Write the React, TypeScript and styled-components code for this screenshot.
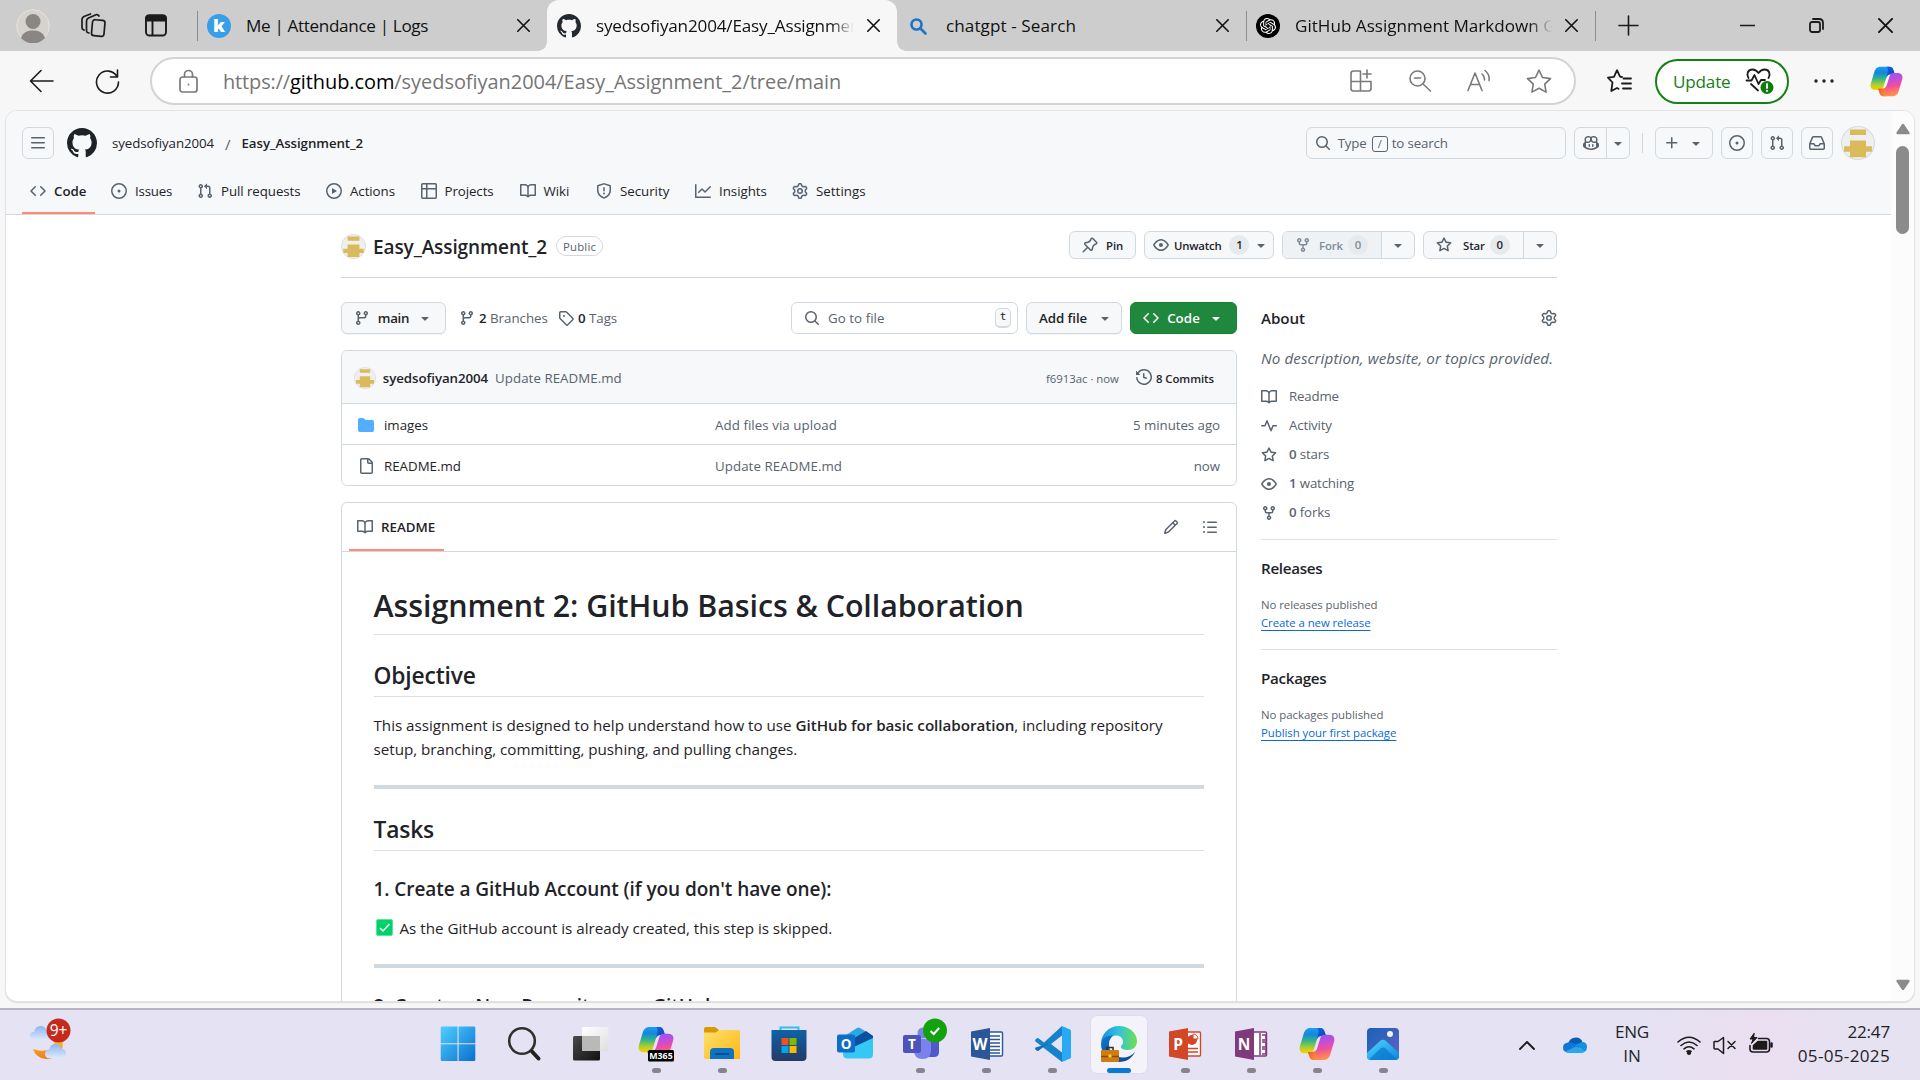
import React, { ReactNode } from 'react';
import styled, { createGlobalStyle, css } from 'styled-components';
import { SiOpenai } from 'react-icons/si';

const ink = '#1f2328';
const muted = '#59636e';
const line = '#d1d9e0';
const canvas = '#f6f8fa';

/* Octicons, 16px grid */
const paths = {
  github: 'M8 0c4.42 0 8 3.58 8 8a8.013 8.013 0 0 1-5.45 7.59c-.4.08-.55-.17-.55-.38 0-.27.01-1.13.01-2.2 0-.75-.25-1.23-.54-1.48 1.78-.2 3.65-.88 3.65-3.95 0-.88-.31-1.59-.82-2.15.08-.2.36-1.02-.08-2.12 0 0-.67-.22-2.2.82-.64-.18-1.32-.27-2-.27-.68 0-1.36.09-2 .27-1.53-1.03-2.2-.82-2.2-.82-.44 1.1-.16 1.92-.08 2.12-.51.56-.82 1.28-.82 2.15 0 3.06 1.86 3.75 3.64 3.95-.23.2-.44.55-.51 1.07-.46.21-1.61.55-2.33-.66-.15-.24-.6-.83-1.23-.82-.67.01-.27.38.01.53.34.19.73.9.82 1.13.16.45.68 1.31 2.69.94 0 .67.01 1.3.01 1.49 0 .21-.15.45-.55.38A7.995 7.995 0 0 1 0 8c0-4.42 3.58-8 8-8Z',
  code: 'm11.28 3.22 4.25 4.25a.75.75 0 0 1 0 1.06l-4.25 4.25a.749.749 0 0 1-1.275-.326.749.749 0 0 1 .215-.734L13.94 8l-3.72-3.72a.749.749 0 0 1 .326-1.275.749.749 0 0 1 .734.215Zm-6.56 0a.751.751 0 0 1 1.042.018.751.751 0 0 1 .018 1.042L2.06 8l3.72 3.72a.749.749 0 0 1-.326 1.275.749.749 0 0 1-.734-.215L.47 8.53a.75.75 0 0 1 0-1.06Z',
  issue: 'M8 9.5a1.5 1.5 0 1 0 0-3 1.5 1.5 0 0 0 0 3Z M8 0a8 8 0 1 1 0 16A8 8 0 0 1 8 0ZM1.5 8a6.5 6.5 0 1 0 13 0 6.5 6.5 0 0 0-13 0Z',
  pull: 'M1.5 3.25a2.25 2.25 0 1 1 3 2.122v5.256a2.251 2.251 0 1 1-1.5 0V5.372A2.25 2.25 0 0 1 1.5 3.25Zm5.677-.177L9.573.677A.25.25 0 0 1 10 .854V2.5h1A2.5 2.5 0 0 1 13.5 5v5.628a2.251 2.251 0 1 1-1.5 0V5a1 1 0 0 0-1-1h-1v1.646a.25.25 0 0 1-.427.177L7.177 3.427a.25.25 0 0 1 0-.354ZM3.75 2.5a.75.75 0 1 0 0 1.5.75.75 0 0 0 0-1.5Zm0 9.5a.75.75 0 1 0 0 1.5.75.75 0 0 0 0-1.5Zm8.25.75a.75.75 0 1 0 1.5 0 .75.75 0 0 0-1.5 0Z',
  play: 'M8 0a8 8 0 1 1 0 16A8 8 0 0 1 8 0ZM1.5 8a6.5 6.5 0 1 0 13 0 6.5 6.5 0 0 0-13 0Zm4.879-2.773 4.264 2.559a.25.25 0 0 1 0 .428l-4.264 2.559A.25.25 0 0 1 6 10.559V5.442a.25.25 0 0 1 .379-.215Z',
  table: 'M0 1.75C0 .784.784 0 1.75 0h12.5C15.216 0 16 .784 16 1.75v12.5A1.75 1.75 0 0 1 14.25 16H1.75A1.75 1.75 0 0 1 0 14.25ZM6.5 6.5v8h7.75a.25.25 0 0 0 .25-.25V6.5Zm8-1.5V1.75a.25.25 0 0 0-.25-.25H6.5V5Zm-13 1.5v7.75c0 .138.112.25.25.25H5v-8ZM5 5V1.5H1.75a.25.25 0 0 0-.25.25V5Z',
  book: 'M0 1.75A.75.75 0 0 1 .75 1h4.253c1.227 0 2.317.59 3 1.501A3.743 3.743 0 0 1 11.006 1h4.245a.75.75 0 0 1 .75.75v10.5a.75.75 0 0 1-.75.75h-4.507a2.25 2.25 0 0 0-1.591.659l-.622.621a.75.75 0 0 1-1.06 0l-.622-.621A2.25 2.25 0 0 0 5.258 13H.75a.75.75 0 0 1-.75-.75Zm7.251 10.324.004-5.073-.002-2.253A2.25 2.25 0 0 0 5.003 2.5H1.5v9h3.757a3.75 3.75 0 0 1 1.994.574ZM8.755 4.75l-.004 7.322a3.752 3.752 0 0 1 1.992-.572H14.5v-9h-3.495a2.25 2.25 0 0 0-2.25 2.25Z',
  shield: 'M7.467.133a1.748 1.748 0 0 1 1.066 0l5.25 1.68A1.75 1.75 0 0 1 15 3.48V7c0 1.566-.32 3.182-1.303 4.682-.983 1.498-2.585 2.813-5.032 3.855a1.697 1.697 0 0 1-1.33 0c-2.447-1.042-4.049-2.357-5.032-3.855C1.32 10.182 1 8.566 1 7V3.48a1.75 1.75 0 0 1 1.217-1.667Zm.61 1.429a.25.25 0 0 0-.153 0l-5.25 1.68a.25.25 0 0 0-.174.238V7c0 1.358.275 2.666 1.057 3.86.784 1.194 2.121 2.34 4.366 3.297a.196.196 0 0 0 .154 0c2.245-.956 3.582-2.104 4.366-3.298C13.225 9.666 13.5 8.36 13.5 7V3.48a.251.251 0 0 0-.174-.237l-5.25-1.68ZM8.75 4.75v3a.75.75 0 0 1-1.5 0v-3a.75.75 0 0 1 1.5 0ZM9 10.5a1 1 0 1 1-2 0 1 1 0 0 1 2 0Z',
  graph: 'M1.5 1.75V13.5h13.75a.75.75 0 0 1 0 1.5H.75a.75.75 0 0 1-.75-.75V1.75a.75.75 0 0 1 1.5 0Zm14.28 2.53-5.25 5.25a.75.75 0 0 1-1.06 0L7 7.06 4.28 9.78a.751.751 0 0 1-1.042-.018.751.751 0 0 1-.018-1.042l3.25-3.25a.75.75 0 0 1 1.06 0L10 7.94l4.72-4.72a.751.751 0 0 1 1.042.018.751.751 0 0 1 .018 1.042Z',
  gear: 'M8 0a8.2 8.2 0 0 1 .701.031C9.444.095 9.99.645 10.16 1.29l.288 1.107c.018.066.079.158.212.224.231.114.454.243.668.386.123.082.233.09.299.071l1.103-.303c.644-.176 1.392.021 1.82.63.27.385.506.792.704 1.218.315.675.111 1.422-.364 1.891l-.814.806c-.049.048-.098.147-.088.294.016.257.016.515 0 .772-.01.147.038.246.088.294l.814.806c.475.469.679 1.216.364 1.891a7.977 7.977 0 0 1-.704 1.217c-.428.61-1.176.807-1.82.63l-1.102-.302c-.067-.019-.177-.011-.3.071a5.909 5.909 0 0 1-.668.386c-.133.066-.194.158-.211.224l-.29 1.106c-.168.646-.715 1.196-1.458 1.26a8.006 8.006 0 0 1-1.402 0c-.743-.064-1.289-.614-1.458-1.26l-.289-1.106c-.018-.066-.079-.158-.212-.224a5.738 5.738 0 0 1-.668-.386c-.123-.082-.233-.09-.299-.071l-1.103.303c-.644.176-1.392-.021-1.82-.63a8.12 8.12 0 0 1-.704-1.218c-.315-.675-.111-1.422.363-1.891l.815-.806c.05-.048.098-.147.088-.294a6.214 6.214 0 0 1 0-.772c.01-.147-.038-.246-.088-.294l-.815-.806C.635 6.045.431 5.298.746 4.623a7.92 7.92 0 0 1 .704-1.217c.428-.61 1.176-.807 1.82-.63l1.102.302c.067.019.177.011.3-.071.214-.143.437-.272.668-.386.133-.066.194-.158.211-.224l.29-1.106C6.009.645 6.556.095 7.299.03 7.53.01 7.764 0 8 0Zm-.571 1.525c-.036.003-.108.036-.137.146l-.289 1.105c-.147.561-.549.967-.998 1.189-.173.086-.34.183-.5.29-.417.278-.97.423-1.529.27l-1.103-.303c-.109-.03-.175.016-.195.045-.22.312-.412.644-.573.99-.014.031-.021.11.059.19l.815.806c.411.406.562.957.53 1.456a4.709 4.709 0 0 0 0 .582c.032.499-.119 1.05-.53 1.456l-.815.806c-.081.08-.073.159-.059.19.162.346.353.677.573.989.02.03.085.076.195.046l1.102-.303c.56-.153 1.113-.008 1.53.27.161.107.328.204.501.29.447.222.85.629.997 1.189l.289 1.105c.029.109.101.143.137.146a6.6 6.6 0 0 0 1.142 0c.036-.003.108-.036.137-.146l.289-1.105c.147-.561.549-.967.998-1.189.173-.086.34-.183.5-.29.417-.278.97-.423 1.529-.27l1.103.303c.109.029.175-.016.195-.045.22-.313.411-.644.573-.99.014-.031.021-.11-.059-.19l-.815-.806c-.411-.406-.562-.957-.53-1.456a4.709 4.709 0 0 0 0-.582c-.032-.499.119-1.05.53-1.456l.815-.806c.081-.08.073-.159.059-.19a6.464 6.464 0 0 0-.573-.989c-.02-.03-.085-.076-.195-.046l-1.102.303c-.56.153-1.113.008-1.53-.27a4.44 4.44 0 0 0-.501-.29c-.447-.222-.85-.629-.997-1.189l-.289-1.105c-.029-.11-.101-.143-.137-.146a6.6 6.6 0 0 0-1.142 0ZM11 8a3 3 0 1 1-6 0 3 3 0 0 1 6 0ZM9.5 8a1.5 1.5 0 1 0-3.001.001A1.5 1.5 0 0 0 9.5 8Z',
  search: 'M10.68 11.74a6 6 0 0 1-7.922-8.982 6 6 0 0 1 8.982 7.922l3.04 3.04a.749.749 0 0 1-.326 1.275.749.749 0 0 1-.734-.215ZM11.5 7a4.499 4.499 0 1 0-8.997 0A4.499 4.499 0 0 0 11.5 7Z',
  branch: 'M9.5 3.25a2.25 2.25 0 1 1 3 2.122V6A2.5 2.5 0 0 1 10 8.5H6a1 1 0 0 0-1 1v1.128a2.251 2.251 0 1 1-1.5 0V5.372a2.25 2.25 0 1 1 1.5 0v1.836A2.493 2.493 0 0 1 6 7h4a1 1 0 0 0 1-1v-.628A2.25 2.25 0 0 1 9.5 3.25Zm-6 0a.75.75 0 1 0 1.5 0 .75.75 0 0 0-1.5 0Zm8.25-.75a.75.75 0 1 0 0 1.5.75.75 0 0 0 0-1.5ZM4.25 12a.75.75 0 1 0 0 1.5.75.75 0 0 0 0-1.5Z',
  tag: 'M1 7.775V2.75C1 1.784 1.784 1 2.75 1h5.025c.464 0 .91.184 1.238.513l6.25 6.25a1.75 1.75 0 0 1 0 2.474l-5.026 5.026a1.75 1.75 0 0 1-2.474 0l-6.25-6.25A1.752 1.752 0 0 1 1 7.775Zm1.5 0c0 .066.026.13.073.177l6.25 6.25a.25.25 0 0 0 .354 0l5.025-5.025a.25.25 0 0 0 0-.354l-6.25-6.25a.25.25 0 0 0-.177-.073H2.75a.25.25 0 0 0-.25.25ZM6 5a1 1 0 1 1 0 2 1 1 0 0 1 0-2Z',
  fork: 'M5 5.372v.878c0 .414.336.75.75.75h4.5a.75.75 0 0 0 .75-.75v-.878a2.25 2.25 0 1 1 1.5 0v.878a2.25 2.25 0 0 1-2.25 2.25h-1.5v2.128a2.251 2.251 0 1 1-1.5 0V8.5h-1.5A2.25 2.25 0 0 1 3.5 6.25v-.878a2.25 2.25 0 1 1 1.5 0ZM5 3.25a.75.75 0 1 0-1.5 0 .75.75 0 0 0 1.5 0Zm6.75.75a.75.75 0 1 0 0-1.5.75.75 0 0 0 0 1.5Zm-3 8.75a.75.75 0 1 0-1.5 0 .75.75 0 0 0 1.5 0Z',
  star: 'M8 .25a.75.75 0 0 1 .673.418l1.882 3.815 4.21.612a.75.75 0 0 1 .416 1.279l-3.046 2.97.719 4.192a.751.751 0 0 1-1.088.791L8 12.347l-3.766 1.98a.75.75 0 0 1-1.088-.79l.72-4.194L.818 6.374a.75.75 0 0 1 .416-1.28l4.21-.611L7.327.668A.75.75 0 0 1 8 .25Zm0 2.445L6.615 5.5a.75.75 0 0 1-.564.41l-3.097.45 2.24 2.184a.75.75 0 0 1 .216.664l-.528 3.084 2.769-1.456a.75.75 0 0 1 .698 0l2.77 1.456-.53-3.084a.75.75 0 0 1 .216-.664l2.24-2.183-3.096-.45a.75.75 0 0 1-.564-.41L8 2.694Z',
  eye: 'M8 2c1.981 0 3.671.992 4.933 2.078 1.27 1.091 2.187 2.345 2.637 3.023a1.62 1.62 0 0 1 0 1.798c-.45.678-1.367 1.932-2.637 3.023C11.67 13.008 9.981 14 8 14c-1.981 0-3.671-.992-4.933-2.078C1.797 10.83.88 9.576.43 8.898a1.62 1.62 0 0 1 0-1.798c.45-.677 1.367-1.931 2.637-3.022C4.33 2.992 6.019 2 8 2ZM1.679 7.932a.12.12 0 0 0 0 .136c.411.622 1.241 1.75 2.366 2.717C5.176 11.758 6.527 12.5 8 12.5c1.473 0 2.825-.742 3.955-1.715 1.124-.967 1.954-2.096 2.366-2.717a.12.12 0 0 0 0-.136c-.412-.621-1.242-1.75-2.366-2.717C10.824 4.242 9.473 3.5 8 3.5c-1.473 0-2.825.742-3.955 1.715-1.124.967-1.954 2.096-2.366 2.717ZM8 10a2 2 0 1 1-.001-3.999A2 2 0 0 1 8 10Z',
  pulse: 'M6 2c.306 0 .582.187.696.471L10 10.731l1.304-3.26A.751.751 0 0 1 12 7h3.25a.75.75 0 0 1 0 1.5h-2.742l-1.812 4.528a.751.751 0 0 1-1.392 0L6 4.77 4.696 8.03A.75.75 0 0 1 4 8.5H.75a.75.75 0 0 1 0-1.5h2.742l1.812-4.529A.751.751 0 0 1 6 2Z',
  history: 'm.427 1.927 1.215 1.215a8.002 8.002 0 1 1-1.6 5.685.75.75 0 1 1 1.493-.154 6.5 6.5 0 1 0 1.18-4.458l1.358 1.358A.25.25 0 0 1 3.896 6H.25A.25.25 0 0 1 0 5.75V2.104a.25.25 0 0 1 .427-.177ZM7.75 4a.75.75 0 0 1 .75.75v2.992l2.028.812a.75.75 0 0 1-.557 1.392l-2.5-1A.751.751 0 0 1 7 8.25v-3.5A.75.75 0 0 1 7.75 4Z',
  folder: 'M1.75 1A1.75 1.75 0 0 0 0 2.75v10.5C0 14.216.784 15 1.75 15h12.5A1.75 1.75 0 0 0 16 13.25v-8.5A1.75 1.75 0 0 0 14.25 3H7.5a.25.25 0 0 1-.2-.1l-.9-1.2C6.07 1.26 5.55 1 5 1H1.75Z',
  file: 'M2 1.75C2 .784 2.784 0 3.75 0h6.586c.464 0 .909.184 1.237.513l2.914 2.914c.329.328.513.773.513 1.237v9.586A1.75 1.75 0 0 1 13.25 16h-9.5A1.75 1.75 0 0 1 2 14.25Zm1.75-.25a.25.25 0 0 0-.25.25v12.5c0 .138.112.25.25.25h9.5a.25.25 0 0 0 .25-.25V6h-2.75A1.75 1.75 0 0 1 9 4.25V1.5Zm6.75.062V4.25c0 .138.112.25.25.25h2.688l-.011-.013-2.914-2.914-.013-.011Z',
  pencil: 'M11.013 1.427a1.75 1.75 0 0 1 2.474 0l1.086 1.086a1.75 1.75 0 0 1 0 2.474l-8.61 8.61c-.21.21-.47.364-.756.445l-3.251.93a.75.75 0 0 1-.927-.928l.929-3.25c.081-.286.235-.547.445-.758l8.61-8.61Zm.176 4.823L9.75 4.81l-6.286 6.287a.253.253 0 0 0-.064.108l-.558 1.953 1.953-.558a.253.253 0 0 0 .108-.064Zm1.238-3.763a.25.25 0 0 0-.354 0L10.811 3.75l1.439 1.44 1.263-1.263a.25.25 0 0 0 0-.354Z',
  list: 'M5.75 2.5h8.5a.75.75 0 0 1 0 1.5h-8.5a.75.75 0 0 1 0-1.5Zm0 5h8.5a.75.75 0 0 1 0 1.5h-8.5a.75.75 0 0 1 0-1.5Zm0 5h8.5a.75.75 0 0 1 0 1.5h-8.5a.75.75 0 0 1 0-1.5ZM2 14a1 1 0 1 1 0-2 1 1 0 0 1 0 2Zm1-6a1 1 0 1 1-2 0 1 1 0 0 1 2 0ZM2 4a1 1 0 1 1 0-2 1 1 0 0 1 0 2Z',
  caret: 'm4.427 7.427 3.396 3.396a.25.25 0 0 0 .354 0l3.396-3.396A.25.25 0 0 0 11.396 7H4.604a.25.25 0 0 0-.177.427Z',
  plus: 'M7.75 2a.75.75 0 0 1 .75.75V7h4.25a.75.75 0 0 1 0 1.5H8.5v4.25a.75.75 0 0 1-1.5 0V8.5H2.75a.75.75 0 0 1 0-1.5H7V2.75A.75.75 0 0 1 7.75 2Z',
  inbox: 'M2.8 2.06A1.75 1.75 0 0 1 4.41 1h7.18c.7 0 1.333.417 1.61 1.06l2.74 6.395c.04.093.06.194.06.295v4.5A1.75 1.75 0 0 1 14.25 15H1.75A1.75 1.75 0 0 1 0 13.25v-4.5c0-.101.02-.202.06-.295Zm1.61.44a.25.25 0 0 0-.23.152L1.887 8H4.75a.75.75 0 0 1 .6.3L6.625 10h2.75l1.275-1.7a.75.75 0 0 1 .6-.3h2.863L11.82 2.652a.25.25 0 0 0-.23-.152Zm10.09 7h-2.875l-1.275 1.7a.75.75 0 0 1-.6.3h-3.5a.75.75 0 0 1-.6-.3L4.375 9.5H1.5v3.75c0 .138.112.25.25.25h12.5a.25.25 0 0 0 .25-.25Z',
  bars: 'M1 2.75A.75.75 0 0 1 1.75 2h12.5a.75.75 0 0 1 0 1.5H1.75A.75.75 0 0 1 1 2.75Zm0 5A.75.75 0 0 1 1.75 7h12.5a.75.75 0 0 1 0 1.5H1.75A.75.75 0 0 1 1 7.75ZM1.75 12h12.5a.75.75 0 0 1 0 1.5H1.75a.75.75 0 0 1 0-1.5Z',
  pin: 'm11.294.984 3.722 3.722a1.75 1.75 0 0 1-.504 2.826l-1.327.613a3.089 3.089 0 0 0-1.707 2.084l-.584 2.454c-.317 1.332-1.972 1.8-2.94.832L5.75 11.311 1.78 15.28a.749.749 0 1 1-1.06-1.06l3.969-3.97-2.204-2.204c-.968-.968-.5-2.623.832-2.94l2.454-.584a3.08 3.08 0 0 0 2.084-1.707l.613-1.327a1.75 1.75 0 0 1 2.826-.504ZM6.283 9.723l2.732 2.731a.25.25 0 0 0 .42-.119l.584-2.454a4.586 4.586 0 0 1 2.537-3.098l1.328-.613a.25.25 0 0 0 .072-.404l-3.722-3.722a.25.25 0 0 0-.404.072l-.613 1.328a4.584 4.584 0 0 1-3.098 2.537l-2.454.584a.25.25 0 0 0-.119.42l2.731 2.732Z',
  copilot: 'M7.998 15.035c-4.562 0-7.873-2.914-7.998-3.749V9.338c.085-.628.677-1.686 1.588-2.065.013-.07.024-.143.036-.218.029-.183.06-.384.126-.612-.201-.508-.254-1.084-.254-1.656 0-.87.128-1.769.693-2.484.579-.733 1.494-1.124 2.724-1.261 1.206-.134 2.262.034 2.944.765.05.053.096.108.139.165.044-.057.094-.112.143-.165.682-.731 1.738-.899 2.944-.765 1.23.137 2.145.528 2.724 1.261.566.715.693 1.614.693 2.484 0 .572-.053 1.148-.254 1.656.066.228.098.429.126.612.012.076.024.148.037.218.924.385 1.522 1.471 1.591 2.095v1.872c0 .766-3.351 3.795-8.002 3.795Zm0-1.485c2.28 0 4.584-1.11 5.002-1.433V7.862l-.023-.116c-.49.21-1.075.291-1.727.291-1.146 0-2.059-.327-2.71-.991A3.222 3.222 0 0 1 8 6.303a3.24 3.24 0 0 1-.544.743c-.65.664-1.563.991-2.71.991-.652 0-1.236-.081-1.727-.291l-.023.116v4.255c.419.323 2.722 1.433 5.002 1.433ZM6.762 2.83c-.193-.206-.637-.413-1.682-.297-1.019.113-1.479.404-1.713.7-.247.312-.369.789-.369 1.554 0 .793.129 1.171.308 1.371.162.181.519.379 1.442.379.853 0 1.339-.235 1.638-.54.315-.322.527-.827.617-1.553.117-.935-.037-1.395-.241-1.614Zm4.155-.297c-1.044-.116-1.488.091-1.681.297-.204.219-.359.679-.242 1.614.091.726.303 1.231.618 1.553.299.305.784.54 1.638.54.922 0 1.28-.198 1.442-.379.179-.2.308-.578.308-1.371 0-.765-.123-1.242-.37-1.554-.233-.296-.693-.587-1.713-.7Z M6.25 9.037a.75.75 0 0 1 .75.75v1.501a.75.75 0 0 1-1.5 0V9.787a.75.75 0 0 1 .75-.75Zm4.25.75v1.501a.75.75 0 0 1-1.5 0V9.787a.75.75 0 0 1 1.5 0Z',
};

const Glyph = styled.svg<{ $size?: number; $color?: string }>`
  flex: none;
  display: block;
  width: ${p => p.$size ?? 16}px;
  height: ${p => p.$size ?? 16}px;
  fill: ${p => p.$color ?? muted};
`;

const Octicon = ({ name, size, color }: { name: keyof typeof paths; size?: number; color?: string }) => (
  <Glyph viewBox="0 0 16 16" $size={size} $color={color}>
    <path d={paths[name]} />
  </Glyph>
);

/* Stroked icons of the browser chrome and the system tray */
const Stroke = styled.svg<{ $w: number; $h: number; $color?: string; $stroke?: number }>`
  flex: none;
  display: block;
  width: ${p => p.$w}px;
  height: ${p => p.$h}px;
  fill: none;
  stroke: ${p => p.$color ?? '#1b1b1b'};
  stroke-width: ${p => p.$stroke ?? 1.6};
  stroke-linecap: round;
  stroke-linejoin: round;
`;

const Global = createGlobalStyle`
  * { box-sizing: border-box; }
  body { margin: 0; overflow: hidden; background: #f7f7f7; }
  h1, h2, h3, p, hr { margin: 0; }
`;

const Text = styled.span<{ $size?: number; $bold?: boolean; $color?: string; $track?: number; $flat?: boolean }>`
  font-size: ${p => (p.$size ?? 14) * 0.95}px;
  font-weight: ${p => (p.$bold ? 600 : 400)};
  color: ${p => p.$color ?? ink};
  letter-spacing: ${p => p.$track ?? -0.004}em;
  white-space: pre;
  ${p => !p.$flat && css`position: relative; top: 1px;`}
`;

const Screen = styled.div`
  width: 1920px;
  height: 1080px;
  display: flex;
  flex-direction: column;
  overflow: hidden;
  font-family: "Open Sans", "Noto Sans", sans-serif;
  line-height: 1.5;
  color: ${ink};
`;

const Browser = styled.div`
  height: 1008px;
  flex: none;
  display: flex;
  flex-direction: column;
  background: #f7f7f7;
`;

/* ---------- tab strip ---------- */
const TabStrip = styled.div`
  height: 51px;
  flex: none;
  display: flex;
  background: #cdcdcd;
`;
const StripTools = styled.div`
  width: 197px;
  display: flex;
  align-items: center;
  padding-left: 16px;
`;
const ToolSlot = styled.div<{ $gap: number }>`
  margin-right: ${p => p.$gap}px;
`;
const Tab = styled.div<{ $active?: boolean; $divided?: boolean; $width: number }>`
  position: relative;
  width: ${p => p.$width}px;
  display: flex;
  align-items: center;
  padding: 0 17px 0 10px;
  ${p => p.$active && css`
    background: #f7f7f7;
    border-radius: 12px 12px 0 0;
    &::before, &::after {
      content: '';
      position: absolute;
      bottom: 0;
      width: 9px;
      height: 9px;
    }
    &::before { left: -9px; background: radial-gradient(circle at 0 0, #cdcdcd 8.5px, #f7f7f7 9px); }
    &::after { right: -9px; background: radial-gradient(circle at 100% 0, #cdcdcd 8.5px, #f7f7f7 9px); z-index: 1; }
  `}
  ${p => p.$divided && css`
    background: linear-gradient(#8d8d8d, #8d8d8d) 0 11px / 1px 30px no-repeat;
  `}
`;
const Favicon = styled.div`
  width: 24px;
  margin-right: 15px;
  display: flex;
`;
const TabTitle = styled.div<{ $fade?: boolean }>`
  flex: 1;
  min-width: 0;
  overflow: hidden;
  margin-right: 13px;
  ${p => p.$fade && css`mask-image: linear-gradient(90deg, #000 91%, transparent 100%);`}
`;
const WindowButtons = styled.div`
  flex: 1;
  display: flex;
  align-items: center;
  padding-left: 23px;
  background: linear-gradient(#8d8d8d, #8d8d8d) 0 11px / 1px 30px no-repeat;
`;
const KBadge = styled.div`
  width: 24px;
  height: 24px;
  border-radius: 50%;
  background: #379fe8;
  color: #fff;
  font-size: 18px;
  font-weight: 800;
  line-height: 22px;
  text-align: center;
`;

const Cross = ({ size = 13 }: { size?: number }) => (
  <Stroke $w={size} $h={size} viewBox="0 0 13 13" $color="#111" $stroke={1.6}>
    <path d="M.8.8l11.4 11.4M12.2.8L.8 12.2" />
  </Stroke>
);

/* ---------- address bar ---------- */
const AddressRow = styled.div`
  height: 59px;
  flex: none;
  display: flex;
  align-items: center;
  padding: 1px 17px 0 29px;
`;
const NavIcons = styled.div`
  width: 121px;
  display: flex;
  gap: 41px;
`;
const AddressBox = styled.div`
  width: 1426px;
  height: 48px;
  display: flex;
  align-items: center;
  padding: 0 22px 0 27px;
  background: #fff;
  border: 2px solid #d3d3d3;
  border-radius: 24px;
`;
const Url = styled.div`
  flex: 1;
  margin-left: 25px;
  line-height: 30px;
`;
const BoxIcons = styled.div`
  display: flex;
  gap: 35px;
`;
const FavSlot = styled.div`
  width: 79px;
  padding-left: 31px;
`;
const UpdateButton = styled.div`
  width: 134px;
  height: 45px;
  display: flex;
  align-items: center;
  justify-content: space-between;
  padding: 0 13px 0 16px;
  border: 2px solid #158015;
  border-radius: 23px;
  background: #fff;
`;
const ChromeEnd = styled.div`
  flex: 1;
  display: flex;
  align-items: center;
  justify-content: space-between;
  padding-left: 25px;
`;

/* ---------- web page frame ---------- */
const Viewport = styled.div`
  flex: 1;
  min-height: 0;
  margin: 0 5px 6px;
  display: flex;
  border: 1px solid #e3e3e3;
  border-radius: 12px;
  overflow: hidden;
  background: #fff;
  box-shadow: 0 1px 1px #dcdcdc;
`;
const Page = styled.div`
  width: 1885px;
  height: 890px;
  overflow: hidden;
`;
const ScrollTrack = styled.div`
  flex: 1;
  display: flex;
  flex-direction: column;
  align-items: center;
  padding: 11px 0 9px;
  background: #fcfcfc;
`;
const ScrollThumb = styled.div`
  width: 13px;
  height: 88px;
  margin: 10px 0 auto;
  border-radius: 7px;
  background: #8b8b8b;
`;

/* ---------- GitHub header ---------- */
const Header = styled.header`
  height: 104px;
  padding: 16px 16px 0;
  display: flex;
  flex-direction: column;
  justify-content: space-between;
  background: ${canvas};
  border-bottom: 1px solid ${line};
`;
const HeaderRow = styled.div`
  display: flex;
  align-items: center;
  height: 32px;
`;
const Crumbs = styled.div`
  flex: 1;
  display: flex;
  align-items: center;
  gap: 11px;
  margin-left: 15px;
`;
const IconButton = styled.div<{ $width?: number; $mr?: number }>`
  width: ${p => p.$width ?? 32}px;
  height: 32px;
  margin-right: ${p => p.$mr ?? 8}px;
  flex: none;
  display: flex;
  align-items: center;
  justify-content: center;
  gap: 8px;
  border: 1px solid ${line};
  border-radius: 6px;
`;
const SplitButton = styled(IconButton)`
  gap: 0;
`;
const SplitHalf = styled.div<{ $width: number; $rule?: boolean }>`
  width: ${p => p.$width}px;
  height: 100%;
  display: flex;
  align-items: center;
  justify-content: center;
  ${p => p.$rule && css`border-left: 1px solid ${line};`}
`;
const SearchBox = styled.div`
  width: 260px;
  height: 32px;
  margin-right: 8px;
  display: flex;
  align-items: center;
  padding-left: 8px;
  border: 1px solid ${line};
  border-radius: 6px;
`;
const SlashKey = styled.kbd`
  width: 16px;
  height: 16px;
  margin: 1px 4px 0 5px;
  border: 1px solid ${muted};
  border-radius: 3px;
  font: 11px/14px "Open Sans", sans-serif;
  color: ${muted};
  text-align: center;
`;
const HeaderDivider = styled.div`
  width: 1px;
  height: 20px;
  margin: 0 12px 0 4px;
  background: ${line};
`;
const RepoNav = styled.nav`
  display: flex;
  gap: 8px;
`;
const NavItem = styled.div<{ $width: number; $active?: boolean }>`
  width: ${p => p.$width}px;
  height: 47px;
  padding-left: 8px;
  display: flex;
  align-items: center;
  gap: 8px;
  border-top: 2px solid transparent;
  border-bottom: 2px solid ${p => (p.$active ? '#fd8c73' : 'transparent')};
`;

/* ---------- repository ---------- */
const Container = styled.main`
  width: 1216px;
  margin-left: 335px;
`;
const RepoHead = styled.div`
  height: 63px;
  display: flex;
  align-items: flex-start;
  padding-top: 16px;
  border-bottom: 1px solid ${line};
`;
const RepoTitle = styled.div`
  flex: 1;
  display: flex;
  align-items: center;
  height: 30px;
`;
const RepoName = styled.div`
  margin: 0 9px 0 7px;
`;
const PublicBadge = styled.span`
  width: 47px;
  height: 20px;
  display: flex;
  align-items: center;
  justify-content: center;
  border: 1px solid ${line};
  border-radius: 10px;
`;
const Actions = styled.div`
  display: flex;
  gap: 8px;
`;
const ActionButton = styled.div<{ $width: number }>`
  width: ${p => p.$width}px;
  height: 28px;
  display: flex;
  align-items: center;
  border: 1px solid ${line};
  border-radius: 6px;
  background: ${canvas};
  overflow: hidden;
`;
const ActionMain = styled.div<{ $pad: number; $gap: number; $off?: boolean }>`
  flex: 1;
  height: 100%;
  display: flex;
  align-items: center;
  padding-left: ${p => p.$pad}px;
  gap: ${p => p.$gap}px;
  background: ${p => (p.$off ? '#eff2f5' : 'transparent')};
`;
const Counter = styled.span<{ $ml?: number }>`
  width: 20px;
  height: 20px;
  margin-left: ${p => p.$ml ?? 0}px;
  display: flex;
  align-items: center;
  justify-content: center;
  border-radius: 10px;
  background: #e7eaed;
`;
const Columns = styled.div`
  display: grid;
  grid-template-columns: 896px 296px;
  gap: 24px;
  padding-top: 24px;
`;
const FileBar = styled.div`
  height: 32px;
  display: flex;
  align-items: center;
  margin-bottom: 16px;
`;
const BarButton = styled.div<{ $width: number; $primary?: boolean; $end?: number }>`
  width: ${p => p.$width}px;
  height: 32px;
  padding: 0 ${p => p.$end ?? 12}px 0 12px;
  display: flex;
  align-items: center;
  justify-content: space-between;
  border: 1px solid ${p => (p.$primary ? '#1a7f37' : line)};
  border-radius: 6px;
  background: ${p => (p.$primary ? '#1f883d' : canvas)};
  box-shadow: 0 1px 0 rgba(31, 35, 40, 0.05);
`;
const RefStat = styled.div<{ $ml: number; $gap: number }>`
  display: flex;
  align-items: center;
  gap: ${p => p.$gap}px;
  margin-left: ${p => p.$ml}px;
`;
const Pair = styled.span`
  display: flex;
`;
const GoToFile = styled.div`
  width: 227px;
  height: 32px;
  margin: 0 8px 0 auto;
  display: flex;
  align-items: center;
  gap: 8px;
  padding: 0 6px 0 12px;
  border: 1px solid ${line};
  border-radius: 6px;
`;
const KeyCap = styled.kbd`
  width: 16px;
  height: 20px;
  margin-left: auto;
  border: 1px solid ${line};
  border-bottom-width: 2px;
  border-radius: 5px;
  background: ${canvas};
  font: 11px/16px "DejaVu Sans Mono", monospace;
  text-align: center;
`;
const Primary = styled.div`
  margin-left: 8px;
`;

const FileTable = styled.div`
  border: 1px solid ${line};
  border-radius: 6px;
  overflow: hidden;
  margin-bottom: 16px;
`;
const CommitRow = styled.div`
  height: 52px;
  display: flex;
  align-items: center;
  padding: 1px 22px 0 12px;
  background: ${canvas};
`;
const CommitMeta = styled.div`
  margin-left: auto;
  display: flex;
  align-items: center;
`;
const FileRow = styled.div`
  height: 41px;
  display: grid;
  grid-template-columns: 16px 321px 1fr auto;
  column-gap: 10px;
  align-items: center;
  padding: 1px 16px 0 16px;
  border-top: 1px solid ${line};
`;
const ReadmeBox = styled.section`
  height: 560px;
  border: 1px solid ${line};
  border-radius: 6px 6px 0 0;
`;
const ReadmeTabs = styled.div`
  height: 49px;
  display: flex;
  align-items: center;
  padding: 0 18px 0 7px;
  border-bottom: 1px solid ${line};
`;
const ReadmeTab = styled.div`
  width: 95px;
  height: 48px;
  margin-right: auto;
  padding-left: 8px;
  display: flex;
  align-items: center;
  gap: 8px;
  border-top: 2px solid transparent;
  border-bottom: 2px solid #fd8c73;
`;
const TabTools = styled.div`
  display: flex;
  gap: 23px;
`;
const Article = styled.article`
  padding: 32px 32px 32px 31.5px;
`;
const Title1 = styled.h1`
  padding: 2px 0 7.6px;
  margin-bottom: 24px;
  border-bottom: 1px solid #dbe1e6;
  font-size: 30.4px;
  line-height: 40px;
  font-weight: 600;
  letter-spacing: -0.0022em;
`;
const Title2 = styled.h2`
  padding: 2px 0 5.2px;
  margin-bottom: 16px;
  border-bottom: 1px solid #dbe1e6;
  font-size: 22.8px;
  line-height: 30px;
  font-weight: 600;
  letter-spacing: -0.007em;
`;
const Title3 = styled.h3`
  margin: 26px 0 14px;
  font-size: 19px;
  line-height: 25px;
  font-weight: 600;
  letter-spacing: -0.0035em;
`;
const Para = styled.p`
  font-size: 15.2px;
  line-height: 24px;
  letter-spacing: -0.001em;
  strong { font-weight: 600; letter-spacing: -0.002em; }
`;
const CheckLine = styled(Para)`
  display: flex;
  align-items: center;
  gap: 7px;
  padding-left: 2px;
`;
const Rule = styled.hr`
  height: 4px;
  margin: 24px 0;
  border: 0;
  background: ${line};
`;

/* ---------- sidebar ---------- */
const AboutHead = styled.div`
  height: 32px;
  display: flex;
  align-items: center;
  justify-content: space-between;
`;
const Description = styled.p`
  margin: 12px 0 12px;
  font-size: 15.2px;
  line-height: 24px;
  font-style: italic;
  color: ${muted};
  letter-spacing: 0.0055em;
  white-space: nowrap;
`;
const StatRow = styled.div`
  height: 29px;
  display: flex;
  align-items: center;
  gap: 12px;
`;
const SideSection = styled.section`
  margin-top: 17px;
  padding-top: 16px;
  border-top: 1px solid #dbe1e6;
  &:first-of-type { margin-top: 12px; }
`;
const SideTitle = styled.h2`
  margin-bottom: 16px;
  line-height: 24px;
  font-size: 15.2px;
  font-weight: 600;
  letter-spacing: -0.02em;
`;
const SideLine = styled.div`
  height: 18px;
  display: flex;
  align-items: center;
`;
const SideLink = styled(Text)`
  color: #0969da;
  text-decoration: underline;
  text-underline-offset: 3px;
`;

/* ---------- taskbar ---------- */
const Taskbar = styled.footer`
  height: 72px;
  display: flex;
  border-top: 2px solid #b6b4c4;
  background: linear-gradient(90deg, #e5e2f3 0 85%, #eadff0 92%, #e6e2f2 97%);
`;
const Weather = styled.div`
  width: 425px;
  padding: 6px 0 0 28px;
`;
const TaskSlot = styled.div`
  width: 66.1px;
  display: flex;
  flex-direction: column;
  align-items: center;
  padding-top: 6px;
`;
const AppPlate = styled.div<{ $active?: boolean }>`
  width: 56px;
  height: 57px;
  display: flex;
  justify-content: center;
  padding-top: 10px;
  border-radius: 6px;
  background: ${p => (p.$active ? '#f4f2fb' : 'transparent')};
  box-shadow: ${p => (p.$active ? '0 0 0 1px #deddec' : 'none')};
  svg { overflow: visible; }
`;
const AppMark = styled.div<{ $active?: boolean }>`
  width: ${p => (p.$active ? 24 : 9)}px;
  height: 5px;
  margin-top: -5px;
  border-radius: 3px;
  background: ${p => (p.$active ? '#0a78d4' : '#86848f')};
`;
const Tray = styled.div`
  width: 381px;
  margin-left: auto;
  margin-right: 30px;
  display: grid;
  grid-template-columns: 36px 60px 54px 114px 1fr;
  align-items: center;
  justify-items: center;
`;
const TrayStack = styled.div<{ $end?: boolean }>`
  display: flex;
  flex-direction: column;
  justify-self: ${p => (p.$end ? 'end' : 'center')};
  align-items: ${p => (p.$end ? 'flex-end' : 'center')};
  margin-bottom: 2px;
  line-height: 24px;
`;
const Status = styled.div`
  display: flex;
  gap: 12px;
  justify-self: end;
`;

const Identicon = ({ size }: { size: number }) => (
  <Glyph viewBox="0 0 33 33" $size={size}>
    <circle cx="16.5" cy="16.5" r="16" fill="#efefef" stroke="#d8dadd" />
    <path fill="#d9bb5b" d="M8.7 3.4h15.6v5.4H8.7zM8.7 14h15.6v5.6h5.7V25h-5.7v5.4H8.7V25H3v-5.4h5.7z" />
  </Glyph>
);

const ribbon = 'M12 2h9c3 0 4 1.6 4.8 4.3L27 10h-4.5c-3 0-4.2 2-5 4.8l-2.7 8.7c-1 3-2.2 3.8-4.3 3.8H6c-4.8 0-6.2-3.2-5-7.3L4.600 8C5.900 3.700 8 2 12 2Z';
const fold = 'M18 2h3c3 0 4 1.6 4.8 4.3L27 10h-4.5c-2.5 0-3.8 1.4-4.7 3.6C19 9 21 3.5 18 2Z';

const CopilotMark = ({ size }: { size: number }) => (
  <Glyph viewBox="0 0 36 36" $size={size}>
    <path fill="url(#cpA)" d={ribbon} />
    <path fill="url(#cpB)" d={fold} />
    <g transform="rotate(180 18 18)">
      <path fill="url(#cpC)" d={ribbon} />
      <path fill="url(#cpD)" d={fold} />
    </g>
  </Glyph>
);

const grad = (id: string, stops: string[], x2 = '1', y2 = '1') => (
  <linearGradient key={id} id={id} x1="0" y1="0" x2={x2} y2={y2}>
    {stops.map((s, i) => <stop key={i} offset={i / (stops.length - 1)} stopColor={s} />)}
  </linearGradient>
);

const Defs = () => (
  <svg width="0" height="0" display="block">
    <defs>
      {grad('cpA', ['#1b9df0', '#1486e0', '#2fb58d', '#a6cc33', '#ffd000'], '0', '1')}
      {grad('cpB', ['#1565d8', '#0c3fc4'])}
      {grad('cpC', ['#ffa33c', '#ff7a63', '#ee4f9d', '#c94bd8', '#9a55ee'], '0.2', '1')}
      {grad('cpD', ['#ff9a3c', '#f04a2c'])}
      {grad('win', ['#4fd0ff', '#0a6fd0'])}
      {grad('fold', ['#ffdf6e', '#fcb813'])}
      {grad('store', ['#0f62a8', '#243a66'], '0', '1')}
      {grad('edge', ['#1a8fe0', '#33c4d8', '#6fe04d'], '1', '0')}
      {grad('edgeB', ['#0f7ad0', '#0a5cae', '#0c4a8c'], '1', '1')}
      {grad('photo', ['#1464b8', '#6a5fc0'])}
      {grad('hill', ['#4fd8ff', '#0a86dc'])}
      {grad('dark', ['#4a4a4a', '#111'])}
      {grad('light', ['#ffffff', '#dedede'])}
      {grad('moon', ['#ffc43c', '#ef7b14'], '0', '1')}
      {grad('cloud', ['#8db4f2', '#dce8fb'], '0', '1')}
    </defs>
  </svg>
);

const Letter = styled.text`
  font-family: "Open Sans", sans-serif;
  font-weight: 700;
  fill: #fff;
  text-anchor: middle;
`;

const Art = ({ children }: { children: ReactNode }) => <Glyph viewBox="0 0 36 36" $size={36}>{children}</Glyph>;

const OfficeBook = ({ name, color, children }: { name: string; color: string; children: ReactNode }) => (
  <Art>
    <path d="M18 6h14.500a1 1 0 0 1 1 1v22a1 1 0 0 1-1 1H18z" fill="#fff" stroke={color} strokeWidth="1.400" />
    {children}
    <path d="M2 5.500l19-3.500v32L2 30.500z" fill={color} />
    <Letter x="11" y="23.500" fontSize="15.500">{name}</Letter>
  </Art>
);

const apps: { art: ReactNode; mark?: boolean; active?: boolean }[] = [
  { art: <Art><path fill="url(#win)" d="M2 .5h15.500v16.700H.7V1.800Q.7.500 2 .500zM18.600.500H34q1.300 0 1.300 1.300v15.400H18.600zM.700 18.300h16.800V35H2Q.700 35 .700 33.700zM18.600 18.300h16.700v15.400q0 1.300-1.300 1.300H18.600z" /></Art> },
  { art: <Art><circle cx="16" cy="15" r="12.800" fill="none" stroke="#2f2f2f" strokeWidth="2.600" /><path d="M26 25.500l6.500 7" stroke="#222" strokeWidth="4" strokeLinecap="round" /></Art> },
  { art: <Art><rect x="1" y="10" width="27" height="24.500" rx="1.500" fill="url(#dark)" /><rect x="10" y="1" width="26.500" height="24" rx="1.500" fill="url(#light)" /><path d="M10 10h18v15H11.500a1.500 1.500 0 0 1-1.500-1.500z" fill="#b9b9b7" /></Art> },
  { mark: true, art: <Art><g transform="translate(0 -1)"><path fill="url(#cpA)" d={ribbon} /><path fill="url(#cpB)" d={fold} /><g transform="rotate(180 18 18)"><path fill="url(#cpC)" d={ribbon} /></g></g><rect x="10" y="24" width="26" height="11.500" rx="1.500" fill="#000" /><Letter x="23" y="32.800" fontSize="8.800">M365</Letter></Art> },
  { mark: true, art: <Art><path d="M0 3q0-2 2-2h9l4 3v4H0z" fill="#d99a00" /><path d="M0 6.500h12l3-2.500h19.500Q36 4 36 5.500V33H1.500Q0 33 0 31.500z" fill="url(#fold)" /><path d="M6 33v-7q0-4 4-4h16q4 0 4 4v7z" fill="#0f73c0" /><path d="M11 28h14" stroke="#0a4c88" strokeWidth="1.800" /></Art> },
  { art: <Art><path d="M9.500 7V1.500h18V7" fill="none" stroke="#30bdf0" strokeWidth="2" /><path d="M.500 4h35v27q0 4-4 4h-27q-4 0-4-4z" fill="url(#store)" /><path d="M10.500 12h7v7h-7z" fill="#f25022" /><path d="M18.500 12h7v7h-7z" fill="#7fba00" /><path d="M10.500 20h7v7h-7z" fill="#00a4ef" /><path d="M18.500 20h7v7h-7z" fill="#ffb900" /></Art> },
  { art: <Art><path d="M6 11L20 2q1.500-.8 3 0l13 8v14H6z" fill="#2aa8e6" /><path d="M9 17l20-12 7 5v6L18 26z" fill="#0a4fa0" /><path d="M6 26L36 12v16q0 4.500-4.500 4.500h-21Q6 32.500 6 28z" fill="#35c8f5" /><rect x="0" y="8.500" width="18" height="18" rx="2" fill="#0f6cc9" /><Letter x="9" y="22.500" fontSize="13.500">O</Letter></Art> },
  { mark: true, art: <Art><circle cx="20" cy="7" r="5.500" fill="#7b83eb" /><circle cx="31" cy="9" r="4" fill="#5059c9" /><path d="M24 14h12v12q0 5-5 5h-5z" fill="#5059c9" /><path d="M11 13h17v11.500q0 8.500-8.500 8.500T11 24.500z" fill="#7b83eb" /><rect x="0" y="9" width="18" height="18" rx="2" fill="#4b53bc" /><Letter x="9" y="23" fontSize="13.500">T</Letter><circle cx="32" cy="4.500" r="12" fill="#13a10e" /><path d="M27.500 5l3.200 3 5.500-6" fill="none" stroke="#fff" strokeWidth="2" /></Art> },
  { mark: true, art: <OfficeBook name="W" color="#2b579a"><path d="M21 10h10M21 13.500h10M21 17h10M21 20.500h10M21 24h10M21 27h10" stroke="#2b579a" strokeWidth="1.500" /></OfficeBook> },
  { mark: true, art: <Art><path d="M27 0L9 16.500l-5.500-4.200Q2.500 11.600 1.500 12.500L.5 13.500q-1 1 0 2L27 36v-9.500L16 18 27 9.500z" fill="#1583cb" /><path d="M9.200 19L.5 21.500q-1 1 0 2l1 1q1 .8 2 .2L16 15z" fill="#0f6fb8" /><path d="M27 0l8 3.500q1 .5 1 1.500v26q0 1-1 1.500L27 36z" fill="#29a9f4" /></Art> },
  { mark: true, active: true, art: <Art><path d="M0 18C0 8 8 0 18 0s18 7 18 15c0 6-4 9-9 9-4 0-7-1-7-3s2-2 2-5c0-4-3-6.500-7-6.500C8 9.500 1 13 0 18z" fill="url(#edge)" /><path d="M0 18c1-7 7-9 13-8.500-4 2-5 6-5 9 0 8 6 13 14 13 5 0 9-2 12-5.500C31 32 26 36 18 36 8 36 0 28 0 18z" fill="url(#edgeB)" /><rect x="0" y="24" width="18" height="12" rx="1" fill="#cf7d10" /><path d="M0 30.500h18" stroke="#8a4c08" strokeWidth="1.500" /><path d="M6 24v-2.500h6V24" fill="none" stroke="#333" strokeWidth="1.600" /><rect x="7.500" y="28.500" width="3" height="3" fill="#ffd23a" /></Art> },
  { mark: true, art: <OfficeBook name="P" color="#d24726"><circle cx="25" cy="14" r="5" fill="#d24726" /><path d="M26 13V8a5 5 0 0 1 5 5z" fill="#fff" stroke="#d24726" /><path d="M21 22.500h10M21 26h10" stroke="#d24726" strokeWidth="1.600" /></OfficeBook> },
  { mark: true, art: <OfficeBook name="N" color="#80397b"><path d="M27 7v22M29 9h4v5h-4M29 16h4v5h-4M29 23h4v5h-4" fill="none" stroke="#80397b" strokeWidth="1.500" /></OfficeBook> },
  { mark: true, art: <CopilotMark size={36} /> },
  { mark: true, art: <Art><rect x="2" y="2" width="32" height="32" rx="4" fill="url(#photo)" /><path d="M2 27l13-12q3-2.500 6 0l13 12v3q0 4-4 4H6q-4 0-4-4z" fill="url(#hill)" /><path d="M4.500 33l11-10.500q2.500-2 5 0L31.500 33q-1 1-2.500 1H7q-1.500 0-2.500-1z" fill="#0a78d0" opacity=".75" /><circle cx="25" cy="8" r="3" fill="#eef4ff" /></Art> },
];

const nav: [keyof typeof paths, string, number, number][] = [
  ['code', 'Code', 73, 0], ['issue', 'Issues', 78, -0.014], ['pull', 'Pull requests', 121, -0.005],
  ['play', 'Actions', 86.5, -0.005], ['table', 'Projects', 91, -0.006], ['book', 'Wiki', 68.5, -0.002],
  ['shield', 'Security', 91, -0.002], ['graph', 'Insights', 89, -0.002], ['gear', 'Settings', 90, 0.003],
];

const files: [keyof typeof paths, string, string, string][] = [
  ['folder', 'images', 'Add files via upload', '5 minutes ago'],
  ['file', 'README.md', 'Update README.md', 'now'],
];

const stats: [keyof typeof paths, string, string][] = [
  ['book', '', 'Readme'], ['pulse', '', 'Activity'], ['star', '0', ' stars'], ['eye', '1', ' watching'], ['fork', '0', ' forks'],
];

const grey = '#7a7a7a';

export default function App() {
  return (
    <Screen>
      <Global />
      <Defs />
      <Browser>
        <TabStrip>
          <StripTools>
            <ToolSlot $gap={31}>
              <Glyph viewBox="0 0 34 34" $size={34}>
                <circle cx="17" cy="17" r="16.300" fill="#d6d2cd" stroke="#e6e3df" />
                <circle cx="17" cy="12.500" r="7.500" fill="#8a8683" />
                <path d="M5 29c2-6 7-7.500 12-7.500S27 23 29 29a16 16 0 0 1-24 0z" fill="#8a8683" />
              </Glyph>
            </ToolSlot>
            <ToolSlot $gap={39}>
              <Stroke $w={25} $h={25} viewBox="0 0 25 25" $stroke={1.700}>
                <rect x="11" y="7" width="12.500" height="16" rx="2.500" transform="rotate(5 17 15)" />
                <path d="M8 20l-1.500-.5Q5.500 19 5.500 17.500V8q0-2 2-3L15 1.800q2-.7 3 1.200" />
                <path d="M3 17l-1-.5Q1 16 1 14.500V6.500q0-2 2-3L9.500 1" />
              </Stroke>
            </ToolSlot>
            <Stroke $w={22} $h={23} viewBox="0 0 22 23" $stroke={1.900}>
              <rect x="1" y="1.500" width="20" height="20" rx="3.500" />
              <path d="M1 6.500V4.500q0-3 3-3h14q3 0 3 3v2z" fill="#1b1b1b" />
              <path d="M7.500 7v14" />
            </Stroke>
          </StripTools>
          <Tab $width={350} $divided>
            <Favicon><KBadge>k</KBadge></Favicon>
            <TabTitle><Text $flat $size={18} $track={-0.0195} $color="#111">Me | Attendance | Logs</Text></TabTitle>
            <Cross />
          </Tab>
          <Tab $width={350} $active>
            <Favicon><Octicon name="github" size={24} color="#24292f" /></Favicon>
            <TabTitle $fade><Text $flat $size={18} $track={-0.01} $color="#111">syedsofiyan2004/Easy_Assignment_2</Text></TabTitle>
            <Cross />
          </Tab>
          <Tab $width={349}>
            <Favicon>
              <Stroke $w={24} $h={24} viewBox="0 0 24 24" $color="#1b74c9" $stroke={2.600}>
                <circle cx="9.500" cy="10.500" r="5" /><path d="M13.500 14.500l5 5" />
              </Stroke>
            </Favicon>
            <TabTitle><Text $flat $size={18} $track={0.005} $color="#111">chatgpt - Search</Text></TabTitle>
            <Cross />
          </Tab>
          <Tab $width={349} $divided>
            <Favicon>
              <Glyph viewBox="0 0 24 24" $size={24}>
                <circle cx="12" cy="12" r="12" fill="#000" />
                <SiOpenai x={4} y={4} width={16} height={16} color="#fff" fill="#fff" />
              </Glyph>
            </Favicon>
            <TabTitle $fade><Text $flat $size={18} $track={0} $color="#111">GitHub Assignment Markdown Guide</Text></TabTitle>
            <Cross />
          </Tab>
          <WindowButtons>
            <ToolSlot $gap={101}><Stroke $w={21} $h={21} viewBox="0 0 21 21"><path d="M10.500 1v19M1 10.500h19" /></Stroke></ToolSlot>
            <ToolSlot $gap={54}><Stroke $w={15} $h={15} viewBox="0 0 15 15"><path d="M.5 7.500h14" /></Stroke></ToolSlot>
            <ToolSlot $gap={54}>
              <Stroke $w={15} $h={15} viewBox="0 0 15 15" $stroke={1.800}>
                <rect x="1" y="4" width="10" height="10" rx="2" /><path d="M4 1h6q4 0 4 4v6" />
              </Stroke>
            </ToolSlot>
            <Cross size={15} />
          </WindowButtons>
        </TabStrip>

        <AddressRow>
          <NavIcons>
            <Stroke $w={25} $h={24} viewBox="0 0 25 24" $stroke={1.600}><path d="M24 12H1.500M12 1.500L1.500 12 12 22.500" /></Stroke>
            <Stroke $w={25} $h={25} viewBox="0 0 25 25" $stroke={1.600}><path d="M22 7.500A11 11 0 1 0 23.500 13M22.500 1v7h-7" /></Stroke>
          </NavIcons>
          <AddressBox>
            <Stroke $w={19} $h={24} viewBox="0 0 19 24" $color={grey} $stroke={1.700}>
              <rect x="1" y="8" width="17" height="15" rx="2.500" /><path d="M5.500 8V5.500a4 4 0 0 1 8 0V8M9.500 15.300v.4" />
            </Stroke>
            <Url>
              <Text $size={21} $track={-0.006} $color="#757575">https://</Text>
              <Text $size={21} $track={-0.003} $color="#000">github.com</Text>
              <Text $size={21} $track={-0.001} $color="#757575">/syedsofiyan2004/Easy_Assignment_2/tree/main</Text>
            </Url>
            <BoxIcons>
              <Stroke $w={24} $h={24} viewBox="0 0 24 24" $color={grey}>
                <path d="M11.500 2H4.500Q2 2 2 4.500v15Q2 22 4.500 22h15q2.500 0 2.500-2.500V12.500H2M11.500 2v20M18 1v8M14 5h8" />
              </Stroke>
              <Stroke $w={24} $h={24} viewBox="0 0 24 24" $color={grey}>
                <circle cx="9.500" cy="9.500" r="7.500" /><path d="M15 15l7.500 7M6.500 9h6" />
              </Stroke>
              <Stroke $w={24} $h={24} viewBox="0 0 24 24" $color={grey}>
                <path d="M1 21.500L8 4l7 17.500M3.500 15.500h9M15 5q2.500 2 2.500 6M18 1.500q5 4 4 10" />
              </Stroke>
              <Stroke $w={26} $h={24} viewBox="0 0 26 24" $color={grey}>
                <path d="M13 1.200l3.500 7.300 8 1.100-5.800 5.600 1.400 7.900L13 19.300l-7.100 3.800 1.400-7.900L1.500 9.600l8-1.100z" />
              </Stroke>
            </BoxIcons>
          </AddressBox>
          <FavSlot>
            <Stroke $w={25} $h={24} viewBox="0 0 25 24" $stroke={1.800}>
              <path d="M15 8l-2-.3L10 1.200 7 7.800l-6 .9 4.500 4.800L4.300 22l5.700-3 1.500.8M16.500 9.500H24M15 14.500h9M16 19.500h8" />
            </Stroke>
          </FavSlot>
          <UpdateButton>
            <Text $size={18} $track={-0.01} $color="#158015">Update</Text>
            <Stroke $w={29} $h={26} viewBox="0 0 29 26" $stroke={1.800}>
              <path d="M3.500 10C1 6 3 1.500 7.500 1.500c3 0 4.500 1.500 6 3.500 1.500-2 3-3.500 6-3.500C24 1.500 26 6 23.500 10M1.500 12.500h5l3-5.500 4 9 2.500-4h4M6 16l7 6.500" />
              <circle cx="22" cy="19.500" r="6.500" fill="#107c10" stroke="none" />
              <path d="M22 16v4M22 22.700v.3" stroke="#fff" />
            </Stroke>
          </UpdateButton>
          <ChromeEnd>
            <Glyph viewBox="0 0 20 20" $size={20} $color="#222"><circle cx="2" cy="10" r="1.700" /><circle cx="10" cy="10" r="1.700" /><circle cx="18" cy="10" r="1.700" /></Glyph>
            <CopilotMark size={33} />
          </ChromeEnd>
        </AddressRow>

        <Viewport>
          <Page>
            <Header>
              <HeaderRow>
                <IconButton $mr={13}><Octicon name="bars" /></IconButton>
                <Octicon name="github" size={30} color={ink} />
                <Crumbs>
                  <Text $track={-0.007}>syedsofiyan2004</Text>
                  <Text $size={16} $color={muted}>/</Text>
                  <Text $bold $track={-0.006}>Easy_Assignment_2</Text>
                </Crumbs>
                <SearchBox>
                  <Octicon name="search" />
                  <Text $color={muted} $track={-0.01}>{'  Type'}</Text>
                  <SlashKey>/</SlashKey>
                  <Text $color={muted} $track={-0.011}>to search</Text>
                </SearchBox>
                <SplitButton $width={56} $mr={8}>
                  <SplitHalf $width={31}><Octicon name="copilot" /></SplitHalf>
                  <SplitHalf $width={23} $rule><Octicon name="caret" /></SplitHalf>
                </SplitButton>
                <HeaderDivider />
                <IconButton $width={58}><Octicon name="plus" /><Octicon name="caret" /></IconButton>
                <IconButton><Octicon name="issue" /></IconButton>
                <IconButton><Octicon name="pull" /></IconButton>
                <IconButton><Octicon name="inbox" /></IconButton>
                <Identicon size={34} />
              </HeaderRow>
              <RepoNav>
                {nav.map(([icon, label, width, track], i) => (
                  <NavItem key={label} $width={width} $active={i === 0}>
                    <Octicon name={icon} />
                    <Text $bold={i === 0} $track={track}>{label}</Text>
                  </NavItem>
                ))}
              </RepoNav>
            </Header>

            <Container>
              <RepoHead>
                <RepoTitle>
                  <Identicon size={25} />
                  <RepoName><Text $size={20} $bold $track={-0.005}>Easy_Assignment_2</Text></RepoName>
                  <PublicBadge><Text $size={12} $color={muted} $track={0.013}>Public</Text></PublicBadge>
                </RepoTitle>
                <Actions>
                  <ActionButton $width={67}>
                    <ActionMain $pad={12} $gap={8}><Octicon name="pin" /><Text $size={12} $bold $track={-0.01}>Pin</Text></ActionMain>
                  </ActionButton>
                  <ActionButton $width={130}>
                    <ActionMain $pad={8} $gap={5}>
                      <Octicon name="eye" /><Text $size={12} $bold $track={-0.02}>Unwatch</Text>
                      <Counter $ml={3}><Text $flat $size={12} $bold>1</Text></Counter>
                    </ActionMain>
                    <SplitHalf $width={24}><Octicon name="caret" /></SplitHalf>
                  </ActionButton>
                  <ActionButton $width={133}>
                    <ActionMain $pad={12} $gap={8} $off>
                      <Octicon name="fork" color="#818b98" /><Text $size={12} $bold $color="#818b98" $track={-0.01}>Fork</Text>
                      <Counter $ml={-3}><Text $flat $size={12} $bold $color="#818b98">0</Text></Counter>
                    </ActionMain>
                    <SplitHalf $width={33} $rule><Octicon name="caret" /></SplitHalf>
                  </ActionButton>
                  <ActionButton $width={134}>
                    <ActionMain $pad={12} $gap={11}>
                      <Octicon name="star" /><Text $size={12} $bold $track={-0.01}>Star</Text>
                      <Counter $ml={-6}><Text $flat $size={12} $bold>0</Text></Counter>
                    </ActionMain>
                    <SplitHalf $width={33} $rule><Octicon name="caret" /></SplitHalf>
                  </ActionButton>
                </Actions>
              </RepoHead>

              <Columns>
                <div>
                  <FileBar>
                    <BarButton $width={105}><Octicon name="branch" /><Text $bold $track={-0.02}>main</Text><Octicon name="caret" /></BarButton>
                    <RefStat $ml={13} $gap={4}><Octicon name="branch" /><Pair><Text $bold>2</Text><Text $color={muted} $track={0}> Branches</Text></Pair></RefStat>
                    <RefStat $ml={10} $gap={4}><Octicon name="tag" /><Pair><Text $bold>0</Text><Text $color={muted} $track={0}> Tags</Text></Pair></RefStat>
                    <GoToFile><Octicon name="search" /><Text $color={muted} $track={0.004}>Go to file</Text><KeyCap>t</KeyCap></GoToFile>
                    <BarButton $width={96} $end={8}><Text $bold $track={-0.005}>Add file</Text><Octicon name="caret" /></BarButton>
                    <Primary>
                      <BarButton $width={107} $primary><Octicon name="code" color="#fff" /><Text $bold $color="#fff" $track={0.005}>Code</Text><Octicon name="caret" color="#fff" /></BarButton>
                    </Primary>
                  </FileBar>

                  <FileTable>
                    <CommitRow>
                      <Identicon size={22} />
                      <Text $bold $track={-0.005}>{'  syedsofiyan2004'}</Text>
                      <Text $color={muted} $track={0.003}>{'  Update README.md'}</Text>
                      <CommitMeta>
                        <Text $size={12} $color={muted} $track={-0.002}>{'f6913ac · now'}</Text>
                        <RefStat $ml={17} $gap={4}><Octicon name="history" /><Text $size={12} $bold $track={-0.005}>8 Commits</Text></RefStat>
                      </CommitMeta>
                    </CommitRow>
                    {files.map(([icon, name, message, when]) => (
                      <FileRow key={name}>
                        <Octicon name={icon} color={icon === 'folder' ? '#54aeff' : muted} />
                        <Text $track={0}>{name}</Text>
                        <Text $color={muted} $track={0.005}>{message}</Text>
                        <Text $color={muted}>{when}</Text>
                      </FileRow>
                    ))}
                  </FileTable>

                  <ReadmeBox>
                    <ReadmeTabs>
                      <ReadmeTab><Octicon name="book" /><Text $bold $track={0}>README</Text></ReadmeTab>
                      <TabTools><Octicon name="pencil" /><Octicon name="list" /></TabTools>
                    </ReadmeTabs>
                    <Article>
                      <Title1>Assignment 2: GitHub Basics &amp; Collaboration</Title1>
                      <Title2>Objective</Title2>
                      <Para>
                        This assignment is designed to help understand how to use <strong>GitHub for basic collaboration</strong>, including repository
                        setup, branching, committing, pushing, and pulling changes.
                      </Para>
                      <Rule />
                      <Title2>Tasks</Title2>
                      <Title3>1. Create a GitHub Account (if you don't have one):</Title3>
                      <CheckLine>
                        <Glyph viewBox="0 0 17 17" $size={17}>
                          <rect x=".5" y=".5" width="16" height="16" rx="1.500" fill="#00d26a" stroke="#5ee39f" />
                          <path d="M4 9l3 3 6.500-7" fill="none" stroke="#fff" strokeWidth="1.500" />
                        </Glyph>
                        As the GitHub account is already created, this step is skipped.
                      </CheckLine>
                      <Rule />
                      <Title3>2. Create a New Repository on GitHub:</Title3>
                    </Article>
                  </ReadmeBox>
                </div>

                <aside>
                  <AboutHead><Text $flat $size={16} $bold $track={-0.005}>About</Text><Octicon name="gear" /></AboutHead>
                  <Description>No description, website, or topics provided.</Description>
                  {stats.map(([icon, count, label]) => (
                    <StatRow key={label}>
                      <Octicon name={icon} />
                      <Pair><Text $flat $bold $color={muted}>{count}</Text><Text $flat $color={muted} $track={-0.015}>{label}</Text></Pair>
                    </StatRow>
                  ))}
                  <SideSection>
                    <SideTitle>Releases</SideTitle>
                    <SideLine><Text $flat $size={12} $color={muted} $track={-0.005}>No releases published</Text></SideLine>
                    <SideLine><SideLink $flat $size={12} $track={-0.006}>Create a new release</SideLink></SideLine>
                  </SideSection>
                  <SideSection>
                    <SideTitle>Packages</SideTitle>
                    <SideLine><Text $flat $size={12} $color={muted} $track={-0.002}>No packages published</Text></SideLine>
                    <SideLine><SideLink $flat $size={12} $track={-0.004}>Publish your first package</SideLink></SideLine>
                  </SideSection>
                </aside>
              </Columns>
            </Container>
          </Page>
          <ScrollTrack>
            <Glyph viewBox="0 0 16 12" $size={14} $color="#8b8b8b"><path d="M8 0q.8 0 1.300.8l6 9q.8 2-1 2.200H1.700q-1.800-.2-1-2.200l6-9Q7.200 0 8 0z" /></Glyph>
            <ScrollThumb />
            <Glyph viewBox="0 0 16 12" $size={14} $color="#8b8b8b"><path d="M8 12q.8 0 1.300-.8l6-9q.8-2-1-2.200H1.700q-1.800.2-1 2.200l6 9q.5.8 1.300.8z" /></Glyph>
          </ScrollTrack>
        </Viewport>
      </Browser>

      <Taskbar>
        <Weather>
          <Glyph viewBox="0 0 46 46" $size={46}>
            <path d="M26 22q2 9-6 12-8 2-15-1 3 9 13 10 9 0 15-7 3-7 1-14z" fill="url(#moon)" />
            <path d="M6 24q-4 0-4-4t4-4q1-6 6.500-6 5 0 6 5 4 1 3.500 5-.500 4-4 4z" fill="url(#cloud)" />
            <path d="M21 42q-4 0-4-4t4-4q1-6 6.500-6 5 0 6 5 4.500 0 4.500 5 0 4-4 4z" fill="url(#cloud)" />
            <circle cx="30.500" cy="14.500" r="12" fill="#c42b1c" />
            <text x="30.500" y="20" fontSize="15.500" fontFamily="Open Sans" fill="#fff" textAnchor="middle">9+</text>
          </Glyph>
        </Weather>
        {apps.map((app, i) => (
          <TaskSlot key={i}>
            <AppPlate $active={app.active}>{app.art}</AppPlate>
            {app.mark && <AppMark $active={app.active} />}
          </TaskSlot>
        ))}
        <Tray>
          <Stroke $w={16} $h={9} viewBox="0 0 16 9" $stroke={1.900}><path d="M1 8l7-7 7 7" /></Stroke>
          <Glyph viewBox="0 0 24 24" $size={24}>
            <path d="M5 10.500q2-6 8-6 5 0 6.500 5l-8 5z" fill="#0a5cb8" />
            <path d="M5.500 9.500q3-.5 5.500 1l6 4-12 5Q0 19 0 14.500q0-4.500 5.500-5z" fill="#0f78d4" />
            <path d="M12 12l7-3q5 0 5 5 0 3-2 4.500z" fill="#1490df" />
            <path d="M2.500 18.500L13 13.500l9.500 4.500q-1.500 2-4 2H6q-2.500 0-3.500-1.500z" fill="#28a8ea" />
          </Glyph>
          <TrayStack><Text $flat $size={18} $track={-0.015}>ENG</Text><Text $flat $size={18}>IN</Text></TrayStack>
          <Status>
            <Stroke $w={24} $h={24} viewBox="0 0 24 24" $stroke={1.600}>
              <path d="M1 9q11-9.500 22 0M4 12.500q8-7 16 0M7 15.800q5-4 10 0M10 18.500q2-1.500 4 0" /><circle cx="12" cy="20" r="1.300" fill="#1b1b1b" />
            </Stroke>
            <Stroke $w={24} $h={24} viewBox="0 0 24 24" $stroke={1.500}>
              <path d="M1 9v6q0 1 1 1h3l5.500 4.500V4.500L5 8.500H2Q1 8.500 1 9zM15 8.500l7 7M22 8.500l-7 7" />
            </Stroke>
            <Stroke $w={24} $h={24} viewBox="0 0 24 24" $stroke={1.600}>
              <path d="M9.500 5.500h8q3 0 3 3V16q0 3-3 3H4q-3 0-3-3v-3.500" /><path d="M4.500 16v-3.500l4.500-4h8.500V16z" fill="#1b1b1b" /><path d="M22.500 10.500v3" strokeWidth="2.500" />
              <path d="M5 .500L1 6h3L2.500 10.500 8 4.500H5z" fill="#1b1b1b" strokeWidth="1" />
            </Stroke>
          </Status>
          <TrayStack $end><Text $flat $size={18} $track={-0.012}>22:47</Text><Text $flat $size={18} $track={0.018}>05-05-2025</Text></TrayStack>
        </Tray>
      </Taskbar>
    </Screen>
  );
}
